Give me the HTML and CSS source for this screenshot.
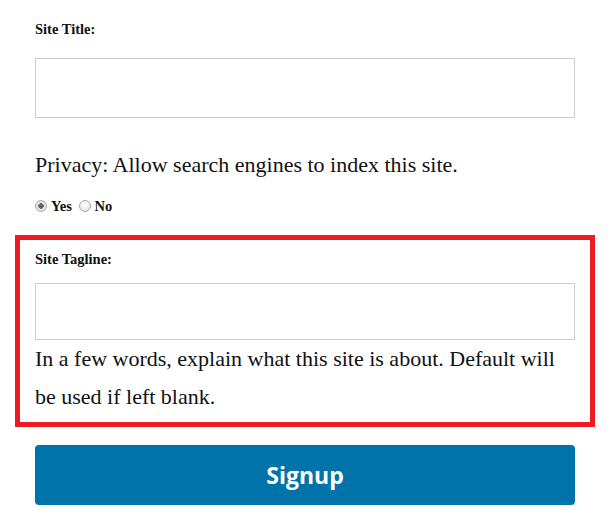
FILE: index.html
```html
<!DOCTYPE html>
<html lang="en">
<head>
    <meta charset="UTF-8">
    <meta name="viewport" content="width=device-width, initial-scale=1.0">
    <title>Signup</title>
    <link rel="stylesheet" href="styles.css">
</head>
<body>
    <form class="signup">
        <label class="label" for="blogname">Site Title:</label>
        <input type="text" id="blogname" class="text-input">

        <p class="privacy">Privacy: Allow search engines to index this site.</p>
        <div class="radios">
            <input type="radio" name="blog_public" id="public-yes" class="radio" checked><label for="public-yes" class="radio-label">Yes</label>
            <input type="radio" name="blog_public" id="public-no" class="radio"><label for="public-no" class="radio-label">No</label>
        </div>

        <div class="highlight">
            <label class="label" for="blogdescription">Site Tagline:</label>
            <input type="text" id="blogdescription" class="text-input tagline-input">
            <p class="description">In a few words, explain what this site is about. Default will be used if left blank.</p>
        </div>

        <button type="submit" class="button">Signup</button>
    </form>
</body>
</html>
```

FILE: styles.css
```css
body {
    margin: 0;
    background: #fff;
    color: #111;
    font-family: 'Liberation Serif', 'Times New Roman', serif;
}

.signup {
    padding: 20px 35px 0;
}

.label {
    display: block;
    font-size: 14.5px;
    line-height: 18px;
    font-weight: bold;
}

.text-input {
    display: block;
    box-sizing: border-box;
    width: 100%;
    height: 60px;
    margin: 20px 0 0;
    border: 1px solid #ccc;
    background: #fff;
}

.privacy {
    margin: 28px 0 12px;
    font-size: 22px;
    line-height: 38px;
}

.radios {
    font-size: 14.5px;
    line-height: 20px;
    font-weight: bold;
}

.radio {
    appearance: none;
    -webkit-appearance: none;
    box-sizing: border-box;
    width: 12px;
    height: 12px;
    margin: 0 4px 0 0;
    vertical-align: -1px;
    border: 1px solid #aaa;
    border-radius: 50%;
    background: radial-gradient(circle at 50% 40%, #fff, #ddd);
}

.radio:checked {
    background: radial-gradient(circle, #666 0, #666 2.5px, #e6e6e6 3px);
}

.radio-label {
    margin-right: 3px;
}

.highlight {
    margin: 19px -20px 0;
    padding: 10px 15px 6px;
    border: 5px solid #ed1c24;
}

.tagline-input {
    height: 57px;
    margin-top: 15px;
}

.description {
    margin: 0;
    padding-right: 12px;
    font-size: 22px;
    line-height: 38px;
}

.button {
    display: block;
    width: 100%;
    height: 60px;
    margin-top: 18px;
    border: none;
    border-radius: 4px;
    background: #0073aa;
    color: #fff;
    font-family: 'Open Sans', sans-serif;
    font-size: 23px;
    font-weight: bold;
    cursor: pointer;
}
```
